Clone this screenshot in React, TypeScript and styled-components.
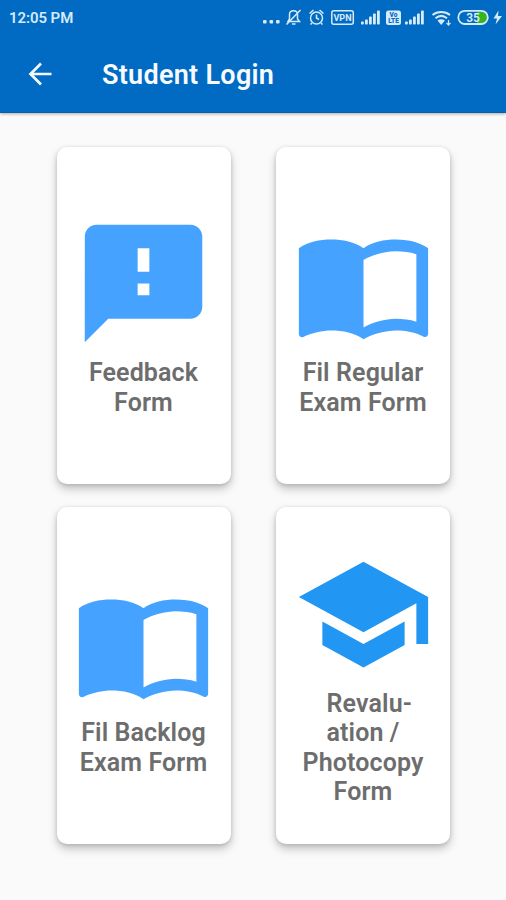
import React from "react";
import styled, { createGlobalStyle } from "styled-components";

const GlobalStyle = createGlobalStyle`
  * { box-sizing: border-box; }
  body { margin: 0; background: #fafafa; font-family: Roboto, "Liberation Sans", sans-serif; }
`;

const Screen = styled.div`
  width: 506px;
  height: 900px;
  overflow: hidden;
  background: #fafafa;
`;

const Header = styled.header`
  height: 113px;
  background: #016ac2;
  border-bottom: 1px solid #0560ac;
  box-shadow: 0 1px 3px rgba(0, 0, 0, 0.32);
`;

const StatusBar = styled.div`
  display: flex;
  align-items: center;
  justify-content: space-between;
  height: 36px;
  padding-left: 9px;
  color: #d6ebfa;
`;

const Clock = styled.span`
  font-size: 15px;
  font-weight: 600;
  line-height: 18px;
  letter-spacing: -0.08px;
`;

const StatusIcons = styled.svg`
  display: block;
  width: 244px;
  height: 36px;
`;

const Toolbar = styled.div`
  display: flex;
  align-items: center;
  height: 76px;
  padding-left: 24px;
  gap: 46px;
`;

const BackButton = styled.button`
  display: flex;
  margin-top: -1px;
  padding: 0;
  border: 0;
  background: none;
  color: #f2f8fd;
`;

const BackIcon = styled.svg`
  width: 32px;
  height: 34px;
`;

const Title = styled.h1`
  margin: 2px 0 0;
  color: #f7fbff;
  font-size: 27px;
  font-weight: 600;
  line-height: 32px;
  letter-spacing: 0.28px;
`;

const Menu = styled.main`
  display: grid;
  grid-template-columns: repeat(2, 174px);
  grid-auto-rows: 337px;
  gap: 23px 45.5px;
  justify-content: center;
  padding: 34px 0 0 0.5px;
`;

const Card = styled.section`
  display: flex;
  flex-direction: column;
  align-items: center;
  justify-content: center;
  border-radius: 10px;
  background: #fff;
  box-shadow: 0 5px 10px rgba(0, 0, 0, 0.22), 0 1px 4px rgba(0, 0, 0, 0.14);
`;

const CardIcon = styled.svg<{ $color: string }>`
  flex: none;
  width: 141px;
  height: 141px;
  margin-top: -1px;
  fill: ${(p) => p.$color};
`;

const Label = styled.h2`
  margin: 4px 0 0;
  color: #6d6d6d;
  font-size: 25px;
  font-weight: 600;
  line-height: 29.4px;
  letter-spacing: 0.12px;
  text-align: center;
  white-space: pre-line;
`;

const FEEDBACK =
  "M20 2H4c-1.1 0-1.99.9-1.99 2L2 22l4-4h14c1.1 0 2-.9 2-2V4c0-1.100-.9-2-2-2zm-7 12h-2v-2h2v2zm0-4h-2V6h2v4z";
const BOOK =
  "M21 5c-1.110-.35-2.330-.5-3.500-.5-1.950 0-4.050.4-5.500 1.500-1.450-1.100-3.550-1.500-5.500-1.500S2.450 4.900 1 6v14.650c0 .25.25.5.5.5.1 0 .15-.05.25-.05C3.100 20.450 5.050 20 6.500 20c1.950 0 4.050.4 5.500 1.500 1.350-.85 3.800-1.500 5.500-1.500 1.650 0 3.350.3 4.750 1.050.1.05.15.05.25.05.25 0 .5-.25.5-.5V6c-.6-.45-1.250-.75-2-1zm0 13.500c-1.100-.35-2.300-.5-3.500-.5-1.700 0-4.150.65-5.500 1.500V8c1.350-.85 3.800-1.500 5.500-1.500 1.200 0 2.400.15 3.500.5v11.500z";
const SCHOOL =
  "M5 13.180v4L12 21l7-3.820v-4L12 17l-7-3.820zM12 3L1 9l11 6 9-4.910V17h2V9L12 3z";

const items = [
  { label: "Feedback\nForm", path: FEEDBACK, color: "#45a2ff" },
  { label: "Fil Regular\nExam Form", path: BOOK, color: "#45a2ff" },
  { label: "Fil Backlog\nExam Form", path: BOOK, color: "#45a2ff" },
  { label: "\u00a0\u00a0Revalu-\nation /\nPhotocopy\nForm", path: SCHOOL, color: "#2196f3" },
];

const Signal = ({ x }: { x: number }) => (
  <g fill="currentColor">
    {[3, 5, 8, 11, 14].map((h, i) => (
      <rect key={h} x={x + i * 4} y={24.5 - h} width="2.8" height={h} rx="0.8" />
    ))}
  </g>
);

const StatusGlyphs = () => (
  <StatusIcons viewBox="262 0 244 36" fill="none" stroke="currentColor" strokeWidth="1.5">
    <g fill="currentColor" stroke="none">
      <rect x="263" y="20" width="3.600" height="3.600" rx="1" />
      <rect x="269.500" y="20" width="3.600" height="3.600" rx="1" />
      <rect x="276" y="20" width="3.600" height="3.600" rx="1" />
    </g>
    <path d="M288 21.500h11.500l-2-2.500v-4.500c0-5-8-5-8 0V19zM292 24h3.500M286.500 24.500L300.500 10" />
    <circle cx="316.500" cy="18" r="6" />
    <path d="M316.500 14.500V18l2.500 1.500M309.500 13.500l4-3.500M323.500 13.500l-4-3.500M312 23l-1.500 1.500M321 23l1.500 1.500" />
    <rect x="331.800" y="10.800" width="21.500" height="13.500" rx="2" />
    <text x="342.500" y="21" textAnchor="middle" fontSize="9" fontWeight="700" fill="currentColor" stroke="none">VPN</text>
    <g stroke="none"><Signal x={361} /></g>
    <rect x="386" y="10.500" width="15" height="14.500" rx="2.500" fill="currentColor" stroke="none" />
    <g fill="#016ac2" stroke="none" fontSize="6.500" fontWeight="900" textAnchor="middle">
      <text x="393.500" y="17">Vo</text>
      <text x="393.500" y="23.300">LTE</text>
    </g>
    <g stroke="none"><Signal x={405} /></g>
    <path d="M432.500 15c5-4 12.500-4 17.500 0M435.500 18.200c3.500-2.800 8-2.800 11.500 0" strokeWidth="2" />
    <path d="M437.500 20.500q3.700-2.500 7.400 0l-3.700 4.500z" fill="currentColor" stroke="none" />
    <path d="M448.500 20v5M446.500 22.800l2 2.200 2-2.200" strokeWidth="1.200" />
    <path d="M477 12h5c7 0 7 11.500 0 11.500h-5z" fill="#35b51e" stroke="none" />
    <rect x="458.300" y="10.800" width="29.500" height="13.200" rx="6.600" strokeWidth="1.800" />
    <text x="473" y="21.700" textAnchor="middle" fontSize="12" fontWeight="600" fill="currentColor" stroke="none">35</text>
    <path d="M498.500 10.500l-5 8h3.500l-1.500 6 6.500-8.500h-4z" fill="currentColor" stroke="none" />
  </StatusIcons>
);

export default function App() {
  return (
    <Screen>
      <GlobalStyle />
      <Header>
        <StatusBar>
          <Clock>12:05 PM</Clock>
          <StatusGlyphs />
        </StatusBar>
        <Toolbar>
          <BackButton aria-label="Back">
            <BackIcon viewBox="0 0 32 34" fill="none" stroke="currentColor" strokeWidth="2.700">
              <path d="M27.500 17H7M17 6.500L6.500 17 17 27.500" />
            </BackIcon>
          </BackButton>
          <Title>Student Login</Title>
        </Toolbar>
      </Header>
      <Menu>
        {items.map((item) => (
          <Card key={item.label}>
            <CardIcon viewBox="0 0 24 24" $color={item.color}>
              <path d={item.path} />
            </CardIcon>
            <Label>{item.label}</Label>
          </Card>
        ))}
      </Menu>
    </Screen>
  );
}
